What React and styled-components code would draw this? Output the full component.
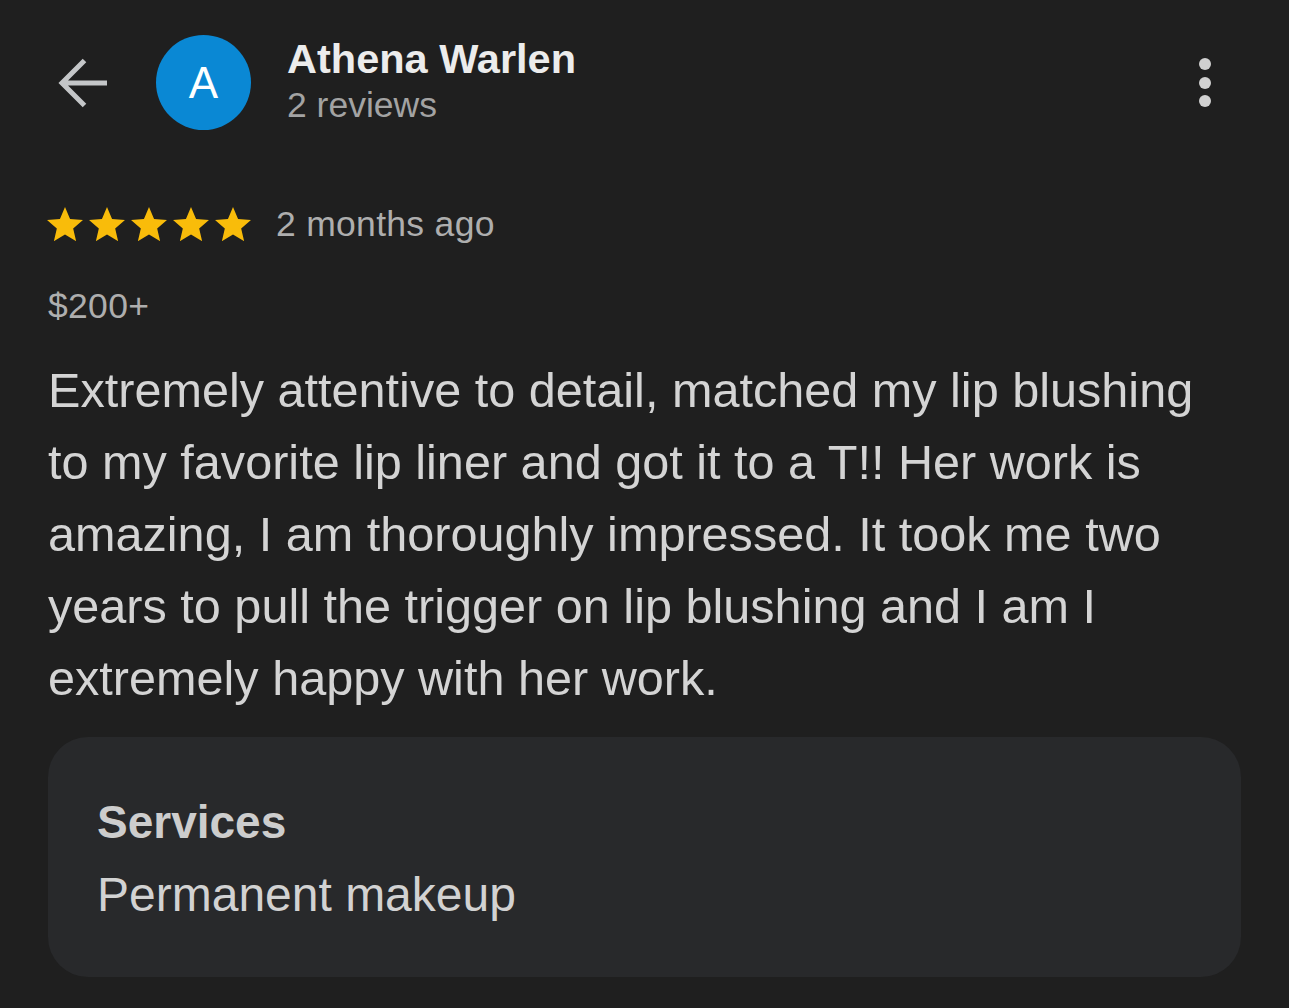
import React from "react";
import styled, { createGlobalStyle } from "styled-components";

const GlobalStyle = createGlobalStyle`
    html, body {
        margin: 0;
        padding: 0;
        background: #1f1f1f;
    }
    body {
        font-family: "Liberation Sans", Arial, sans-serif;
    }
`;

const Page = styled.div`
    width: 1289px;
    min-height: 1008px;
    box-sizing: border-box;
    padding: 35px 48px 0 48px;
    background: #1f1f1f;
`;

const Header = styled.div`
    display: flex;
    align-items: center;
`;

const BackButton = styled.div`
    display: flex;
    align-items: center;
    justify-content: center;
    width: 50px;
    height: 50px;
    margin-left: 10px;
    margin-right: 48px;
`;

const Avatar = styled.div`
    width: 95px;
    height: 95px;
    border-radius: 50%;
    background: #0a88d4;
    color: #ffffff;
    display: flex;
    align-items: center;
    justify-content: center;
    font-size: 44px;
    flex-shrink: 0;
`;

const NameBlock = styled.div`
    display: flex;
    flex-direction: column;
    margin-left: 36px;
`;

const Name = styled.div`
    font-size: 41.5px;
    line-height: 46px;
    font-weight: 700;
    color: #ececec;
`;

const Sub = styled.div`
    font-size: 35.5px;
    line-height: 47px;
    color: #a3a3a3;
`;

const MoreButton = styled.div`
    margin-left: auto;
    margin-right: 30px;
    display: flex;
    flex-direction: column;
    align-items: center;
    gap: 6.5px;
`;

const Dot = styled.span`
    width: 12px;
    height: 12px;
    border-radius: 50%;
    background: #d0d0d0;
`;

const RatingRow = styled.div`
    display: flex;
    align-items: center;
    margin-top: 76px;
    height: 36px;
`;

const Stars = styled.div`
    display: flex;
    gap: 6px;
    margin-left: -1px;
    margin-right: 25px;
`;

const Meta = styled.div`
    font-size: 35.5px;
    line-height: 40px;
    letter-spacing: 0.3px;
    color: ${({ tone }) => tone || "#aeaeae"};
    margin-top: ${({ gap }) => gap || 0}px;
`;

const Body = styled.p`
    margin: 28px 0 0 0;
    max-width: 1170px;
    font-size: 48.6px;
    line-height: 72px;
    color: #d4d4d4;
`;

const Card = styled.div`
    margin-top: 23px;
    background: #28292b;
    border-radius: 40px;
    padding: 57px 49px 54px 49px;
`;

const CardTitle = styled.div`
    font-size: 46px;
    line-height: 56px;
    font-weight: 700;
    color: #cdcdcd;
`;

const CardValue = styled.div`
    margin-top: 17px;
    font-size: 48px;
    line-height: 56px;
    color: #d2d2d2;
`;

const BackArrow = () => (
    <svg width="50" height="50" viewBox="0 0 50 50" fill="none">
        <path
            d="M49 25 H4 M26.5 2.5 L4 25 L26.5 47.5"
            stroke="#c4c6c8"
            strokeWidth="5"
            strokeLinejoin="miter"
        />
    </svg>
);

const Star = () => (
    <svg width="36" height="34.2" viewBox="2 2 20 19">
        <path
            d="M12 17.27L18.18 21l-1.64-7.03L22 9.24l-7.19-.61L12 2 9.19 8.63 2 9.24l5.46 4.73L5.82 21z"
            fill="#f9bc0a"
        />
    </svg>
);

const App = () => {
    return (
        <Page>
            <GlobalStyle />
            <Header>
                <BackButton>
                    <BackArrow />
                </BackButton>
                <Avatar>A</Avatar>
                <NameBlock>
                    <Name>Athena Warlen</Name>
                    <Sub>2 reviews</Sub>
                </NameBlock>
                <MoreButton>
                    <Dot />
                    <Dot />
                    <Dot />
                </MoreButton>
            </Header>

            <RatingRow>
                <Stars>
                    {[0, 1, 2, 3, 4].map((i) => (
                        <Star key={i} />
                    ))}
                </Stars>
                <Meta>2 months ago</Meta>
            </RatingRow>

            <Meta gap={44}>$200+</Meta>

            <Body>
                Extremely attentive to detail, matched my lip blushing to my favorite lip liner
                and got it to a T!! Her work is amazing, I am thoroughly impressed. It took me two
                years to pull the trigger on lip blushing and I am I extremely happy with her work.
            </Body>

            <Card>
                <CardTitle>Services</CardTitle>
                <CardValue>Permanent makeup</CardValue>
            </Card>
        </Page>
    );
};

export default App;
